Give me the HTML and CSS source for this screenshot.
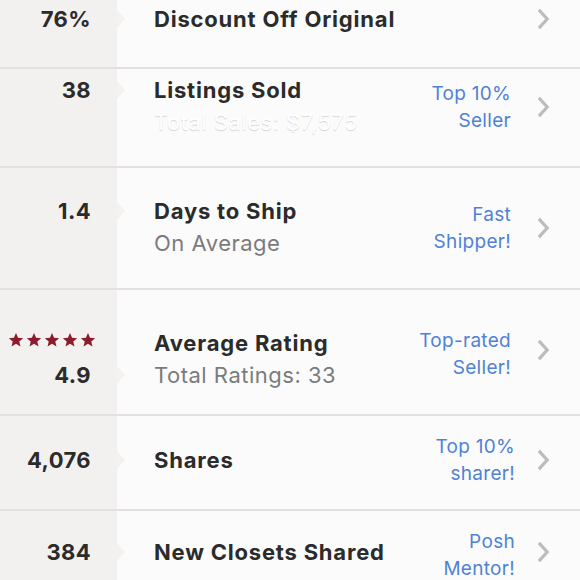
FILE: index.html
```html
<!DOCTYPE html>
<html lang="en">
<head>
  <meta charset="UTF-8" />
  <meta name="viewport" content="width=device-width, initial-scale=1" />
  <title>Closet Stats</title>
  <link rel="stylesheet" href="styles.css">
</head>
<body>

<ul class="stats">
  <li class="row single row-discount">
    <div class="stat">76%</div>
    <div class="title">Discount Off Original</div>
    <div class="badge"></div>
    <svg class="chev" viewBox="0 0 14 24"><polyline points="2,2 11,12 2,22" /></svg>
  </li>

  <li class="row row-sold">
    <div class="stat">38</div>
    <div class="title">Listings Sold</div>
    <div class="sub redacted">Total Sales: $7,575</div>
    <div class="badge">Top 10%<br>Seller</div>
    <svg class="chev" viewBox="0 0 14 24"><polyline points="2,2 11,12 2,22" /></svg>
  </li>

  <li class="row row-ship">
    <div class="stat">1.4</div>
    <div class="title">Days to Ship</div>
    <div class="sub">On Average</div>
    <div class="badge">Fast<br>Shipper!</div>
    <svg class="chev" viewBox="0 0 14 24"><polyline points="2,2 11,12 2,22" /></svg>
  </li>

  <li class="row row-rating">
    <div class="stars">
      <svg viewBox="0 0 24 24"><path d="M12 1.5l3.1 7.1 7.7.6-5.9 5 1.8 7.5L12 17.7l-6.7 4 1.8-7.5-5.9-5 7.7-.6z" /></svg>
      <svg viewBox="0 0 24 24"><path d="M12 1.5l3.1 7.1 7.7.6-5.9 5 1.8 7.5L12 17.7l-6.7 4 1.8-7.5-5.9-5 7.7-.6z" /></svg>
      <svg viewBox="0 0 24 24"><path d="M12 1.5l3.1 7.1 7.7.6-5.9 5 1.8 7.5L12 17.7l-6.7 4 1.8-7.5-5.9-5 7.7-.6z" /></svg>
      <svg viewBox="0 0 24 24"><path d="M12 1.5l3.1 7.1 7.7.6-5.9 5 1.8 7.5L12 17.7l-6.7 4 1.8-7.5-5.9-5 7.7-.6z" /></svg>
      <svg viewBox="0 0 24 24"><path d="M12 1.5l3.1 7.1 7.7.6-5.9 5 1.8 7.5L12 17.7l-6.7 4 1.8-7.5-5.9-5 7.7-.6z" /></svg>
    </div>
    <div class="stat stat-low">4.9</div>
    <div class="title">Average Rating</div>
    <div class="sub">Total Ratings: 33</div>
    <div class="badge">Top-rated<br>Seller!</div>
    <svg class="chev" viewBox="0 0 14 24"><polyline points="2,2 11,12 2,22" /></svg>
  </li>

  <li class="row single row-shares">
    <div class="stat">4,076</div>
    <div class="title">Shares</div>
    <div class="badge wide">Top 10%<br>sharer!</div>
    <svg class="chev" viewBox="0 0 14 24"><polyline points="2,2 11,12 2,22" /></svg>
  </li>

  <li class="row single row-closets">
    <div class="stat">384</div>
    <div class="title">New Closets Shared</div>
    <div class="badge wide">Posh<br>Mentor!</div>
    <svg class="chev" viewBox="0 0 14 24"><polyline points="2,2 11,12 2,22" /></svg>
  </li>
</ul>

</body>
</html>
```

FILE: styles.css
```css
body {
  margin: 0;
  font-family: 'Inter', sans-serif;
  color: #2b2b2b;
  background: linear-gradient(to right, #f3f1ef 117px, #fcfbfb 117px);
  overflow: hidden;
}

.stats {
  list-style: none;
  margin: -29px 0 0;
  padding: 0;
}

.row {
  display: grid;
  grid-template-columns: 117px 1fr auto 50px;
  grid-template-rows: auto auto;
  align-content: center;
  box-sizing: border-box;
  border-bottom: 2px solid #e4e0e0;
}

.row-discount { height: 98px; padding-bottom: 1px; }
.row-sold { height: 99px; padding-bottom: 22px; }
.row-ship { height: 122px; }
.row-rating { height: 126px; padding-top: 16px; }
.row-shares { height: 95px; padding-bottom: 5px; }
.row-closets { height: 90px; padding-bottom: 6px; }

.row-rating .badge { margin-top: -12px; }
.row-rating .chev { margin-top: -20px; }
.row-closets .badge { margin-top: 6px; }

.stat {
  position: relative;
  grid-column: 1;
  grid-row: 1;
  align-self: center;
  text-align: right;
  padding-right: 26px;
  font-size: 22px;
  font-weight: 700;
  letter-spacing: 0.4px;
  line-height: 30px;
}

.stat::after {
  content: "";
  position: absolute;
  right: -8px;
  top: 50%;
  margin-top: -9px;
  border-left: 8px solid #f4f2f0;
  border-top: 9px solid transparent;
  border-bottom: 9px solid transparent;
}

.stat-low {
  grid-row: 2;
}

.stars {
  grid-column: 1;
  grid-row: 1;
  align-self: center;
  display: flex;
  gap: 2px;
  padding-left: 8px;
  margin-top: -6px;
}

.stars svg {
  width: 16px;
  height: 16px;
  fill: #8a1c2e;
}

.title {
  grid-column: 2;
  grid-row: 1;
  align-self: center;
  padding-left: 37px;
  font-size: 22px;
  font-weight: 700;
  letter-spacing: 0.8px;
  line-height: 30px;
  white-space: nowrap;
}

.single .stat,
.single .title {
  grid-row: 1 / 3;
}

.sub {
  grid-column: 2;
  grid-row: 2;
  padding-left: 37px;
  font-size: 22px;
  letter-spacing: 0.5px;
  line-height: 34px;
  color: #7b7b7b;
  white-space: nowrap;
}

.redacted {
  color: #fff;
  text-shadow: 0 1px 1px rgba(40, 40, 40, 0.18);
}

.badge {
  grid-column: 3;
  grid-row: 1 / 3;
  align-self: center;
  text-align: right;
  font-size: 19px;
  letter-spacing: 0.3px;
  line-height: 27px;
  color: #4f82d6;
  padding-right: 19px;
}

.badge.wide {
  padding-right: 15px;
}

.chev {
  grid-column: 4;
  grid-row: 1 / 3;
  align-self: center;
  width: 15px;
  height: 22px;
  margin-left: 6px;
}

.chev polyline {
  fill: none;
  stroke: #bdbcbc;
  stroke-width: 3.5;
}
```
